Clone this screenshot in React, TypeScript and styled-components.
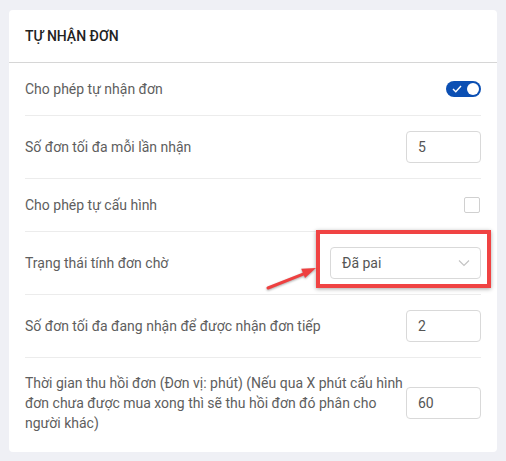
import styled, { createGlobalStyle } from "styled-components";

const GlobalStyle = createGlobalStyle`
  html, body {
    margin: 0;
    padding: 0;
    background: #eff0f5;
  }
  body {
    font-family: Roboto, "Liberation Sans", Arial, sans-serif;
    font-size: 14px;
  }
`;

const Page = styled.div`
  padding: 10px 9px;
  min-height: 461px;
  box-sizing: border-box;
`;

const Card = styled.div`
  background: #fff;
  border-radius: 4px;
  padding-bottom: 4px;
`;

const CardHeader = styled.div`
  padding: 16px 16px 15px;
  border-bottom: 1px solid #d6d6d6;
  font-size: 14px;
  font-weight: 500;
  line-height: 21px;
  color: #222;
  text-transform: uppercase;
`;

const Body = styled.div`
  padding: 0 16px;
`;

const Row = styled.div<{ $last?: boolean }>`
  display: flex;
  align-items: center;
  min-height: 22px;
  padding: 15px 0;
  border-bottom: ${(p) => (p.$last ? "none" : "1px solid #ececec")};
`;

const Label = styled.div`
  flex: 1;
  color: #5e5e5e;
  line-height: 20px;
`;

const NumberInput = styled.div`
  width: 75px;
  height: 32px;
  box-sizing: border-box;
  border: 1px solid #d9d9d9;
  border-radius: 4px;
  padding: 0 11px;
  display: flex;
  align-items: center;
  color: #555;
`;

const SelectWrap = styled.div`
  position: relative;
`;

const Select = styled.div`
  width: 151px;
  height: 32px;
  box-sizing: border-box;
  border: 1px solid #d9d9d9;
  border-radius: 4px;
  padding: 0 10px 0 11px;
  display: flex;
  align-items: center;
  justify-content: space-between;
  color: #555;
`;

const Highlight = styled.div`
  position: absolute;
  left: -14px;
  top: -17px;
  width: 175px;
  height: 58px;
  box-sizing: border-box;
  border: 4px solid #f04343;
  box-shadow: 0 1px 4px rgba(0, 0, 0, 0.35);
  pointer-events: none;
`;

const Arrow = styled.svg`
  position: absolute;
  left: -66px;
  top: 18px;
  overflow: visible;
  filter: drop-shadow(0 1px 1px rgba(0, 0, 0, 0.35));
`;

const Toggle = styled.div`
  width: 35px;
  height: 16px;
  border-radius: 8px;
  background: #0b4fb3;
  position: relative;
  display: flex;
  align-items: center;
  padding-left: 6px;
  box-sizing: border-box;
`;

const Knob = styled.span`
  position: absolute;
  right: 2px;
  top: 2px;
  width: 12px;
  height: 12px;
  border-radius: 50%;
  background: #fff;
`;

const Checkbox = styled.div`
  width: 16px;
  height: 16px;
  box-sizing: border-box;
  border: 1px solid #d0d0d0;
  border-radius: 2px;
  margin-right: 1px;
`;

export default function App() {
  return (
    <>
      <GlobalStyle />
      <Page>
        <Card>
          <CardHeader>Tự nhận đơn</CardHeader>
          <Body>
            <Row>
              <Label>Cho phép tự nhận đơn</Label>
              <Toggle>
                <svg width="10" height="8" viewBox="0 0 10 8">
                  <path d="M1 4 L3.8 6.8 L9 1" fill="none" stroke="#fff" strokeWidth="1.4" />
                </svg>
                <Knob />
              </Toggle>
            </Row>
            <Row>
              <Label>Số đơn tối đa mỗi lần nhận</Label>
              <NumberInput>5</NumberInput>
            </Row>
            <Row>
              <Label>Cho phép tự cấu hình</Label>
              <Checkbox />
            </Row>
            <Row>
              <Label>Trạng thái tính đơn chờ</Label>
              <SelectWrap>
                <Select>
                  <span>Đã pai</span>
                  <svg width="12" height="8" viewBox="0 0 12 8">
                    <path d="M1 1.5 L6 6.5 L11 1.5" fill="none" stroke="#c4c4c4" strokeWidth="1.2" />
                  </svg>
                </Select>
                <Highlight />
                <Arrow width="56" height="30" viewBox="0 0 56 30">
                  <path d="M4 23 L41 8.4" stroke="#ee4040" strokeWidth="3" strokeLinecap="round" />
                  <path d="M52 3 L37.2 3.8 L41 13 Z" fill="#ee4040" />
                </Arrow>
              </SelectWrap>
            </Row>
            <Row>
              <Label>Số đơn tối đa đang nhận để được nhận đơn tiếp</Label>
              <NumberInput>2</NumberInput>
            </Row>
            <Row $last>
              <Label>
                Thời gian thu hồi đơn (Đơn vị: phút) (Nếu qua X phút cấu hình đơn chưa được mua xong thì sẽ thu hồi đơn đó phân cho người khác)
              </Label>
              <NumberInput>60</NumberInput>
            </Row>
          </Body>
        </Card>
      </Page>
    </>
  );
}
